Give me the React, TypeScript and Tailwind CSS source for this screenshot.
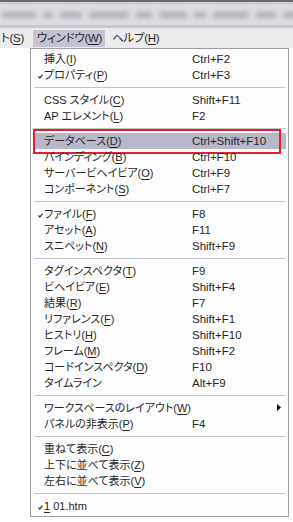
import React from "react";

type Item =
  | { sep: true }
  | {
      sep?: false;
      label: string;
      key?: string;
      tail?: string;
      shortcut?: string;
      checked?: boolean;
      submenu?: boolean;
      active?: boolean;
    };

const items: Item[] = [
  { label: "挿入", key: "I", shortcut: "Ctrl+F2" },
  { label: "プロパティ", key: "P", shortcut: "Ctrl+F3", checked: true },
  { sep: true },
  { label: "CSS スタイル", key: "C", shortcut: "Shift+F11" },
  { label: "AP エレメント", key: "L", shortcut: "F2" },
  { sep: true },
  { label: "データベース", key: "D", shortcut: "Ctrl+Shift+F10", active: true },
  { label: "バインディング", key: "B", shortcut: "Ctrl+F10" },
  { label: "サーバービヘイビア", key: "O", shortcut: "Ctrl+F9" },
  { label: "コンポーネント", key: "S", shortcut: "Ctrl+F7" },
  { sep: true },
  { label: "ファイル", key: "F", shortcut: "F8", checked: true },
  { label: "アセット", key: "A", shortcut: "F11" },
  { label: "スニペット", key: "N", shortcut: "Shift+F9" },
  { sep: true },
  { label: "タグインスペクタ", key: "T", shortcut: "F9" },
  { label: "ビヘイビア", key: "E", shortcut: "Shift+F4" },
  { label: "結果", key: "R", shortcut: "F7" },
  { label: "リファレンス", key: "F", shortcut: "Shift+F1" },
  { label: "ヒストリ", key: "H", shortcut: "Shift+F10" },
  { label: "フレーム", key: "M", shortcut: "Shift+F2" },
  { label: "コードインスペクタ", key: "D", shortcut: "F10" },
  { label: "タイムライン", shortcut: "Alt+F9" },
  { sep: true },
  { label: "ワークスペースのレイアウト", key: "W", submenu: true },
  { label: "パネルの非表示", key: "P", shortcut: "F4" },
  { sep: true },
  { label: "重ねて表示", key: "C" },
  { label: "上下に並べて表示", key: "Z" },
  { label: "左右に並べて表示", key: "V" },
  { sep: true },
  { label: "", key: "1", tail: " 01.htm", checked: true },
];

// タイトルバーのぼかし文字（読めない程度の塊）
const blobs = [34, 10, 22, 40, 16, 28, 12, 36, 20, 18, 30];

function Check() {
  return (
    <svg width="5" height="5" viewBox="0 0 5 5" className="absolute left-[7px] top-[7px]">
      <path d="M0.4 2.4 L1.8 4 L4.6 0.6" fill="none" stroke="#333" strokeWidth="1.2" />
    </svg>
  );
}

function Label({ label, k, tail }: { label: string; k?: string; tail?: string }) {
  if (!k) return <span>{label}</span>;
  if (tail !== undefined) {
    return (
      <span>
        <span className="underline underline-offset-2">{k}</span>
        {tail}
      </span>
    );
  }
  return (
    <span>
      {label}(<span className="underline underline-offset-2">{k}</span>)
    </span>
  );
}

export default function App() {
  return (
    <div
      className="w-[293px] h-[522px] bg-white overflow-hidden text-[11px] leading-[16px] text-[#262626] [font-feature-settings:'palt']"
      style={{ fontFamily: '"Liberation Sans", "Noto Sans CJK JP", sans-serif' }}
    >
      {/* タイトルバー */}
      <div className="h-[28px] flex flex-col">
        <div className="h-[2px] bg-[#6a6a6e]" />
        <div className="h-[3px] bg-[#cfd0d6]" />
        <div className="flex-1 bg-[#dddee4] overflow-hidden flex items-center gap-[7px] pl-[2px]">
          {blobs.map((w, i) => (
            <div
              key={i}
              className="shrink-0 h-[6px] bg-[#8e8e9c] blur-[2.5px] opacity-60"
              style={{ width: w }}
            />
          ))}
        </div>
        <div className="h-[3px] bg-[#c8c8ce]" />
      </div>

      {/* メニューバー */}
      <div className="h-[20px] bg-[#ebebee] flex items-center whitespace-nowrap text-[11.5px] tracking-[-0.3px]">
        <div className="pl-px h-[16px] flex items-center">
          <span>
            ト(<span className="underline underline-offset-2">S</span>)
          </span>
        </div>
        <div className="ml-[9px] pl-[4px] pr-[3px] h-[17px] flex items-center bg-[#c3c3d1]">
          <Label label="ウィンドウ" k="W" />
        </div>
        <div className="ml-[3px] px-[4px] h-[16px] flex items-center">
          <Label label="ヘルプ" k="H" />
        </div>
      </div>

      {/* ドロップダウン */}
      <div className="ml-[30px] w-[259px] border border-[#9d9da3] bg-[#fdfdfd] py-[2px] whitespace-nowrap">
        {items.map((it, i) =>
          it.sep ? (
            <div key={i} className="h-[9px] flex items-center px-[3px]">
              <div className="h-px w-full bg-[#c4c4c8]" />
            </div>
          ) : (
            <div
              key={i}
              className={
                "relative h-[16px] flex items-center " +
                (it.active ? "bg-[#b9b8c9] mx-[2px] pl-[11px]" : "pl-[13px]")
              }
            >
              {it.checked && <Check />}
              <div className="w-[148px]">
                <Label label={it.label} k={it.key} tail={it.tail} />
              </div>
              {it.shortcut && <div className="text-[11.5px]">{it.shortcut}</div>}
              {it.submenu && (
                <svg width="4" height="7" viewBox="0 0 4 7" className="absolute right-[7px] top-[4px]">
                  <path d="M0 0 L4 3.5 L0 7 Z" fill="#111" />
                </svg>
              )}
              {it.active && (
                <div className="absolute left-0 right-[5px] -top-[4px] -bottom-[5px] border-2 border-[#e0222c]" />
              )}
            </div>
          )
        )}
      </div>
    </div>
  );
}
